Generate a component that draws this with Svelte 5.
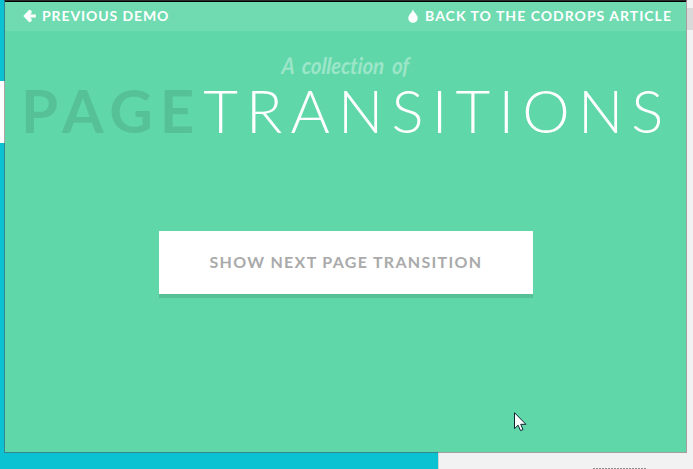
<script>
  const title = { strong: 'PAGE', light: 'TRANSITIONS' };
</script>

<div class="desktop">
  <div class="blue"></div>
  <div class="white-strip"></div>
  <div class="thumb"></div>
  <div class="dots"></div>

  <main class="window">
    <nav>
      <a class="prev" href="#prev">
        <svg width="13" height="14" viewBox="0 0 13 14"><path d="M.3 7 6.2.8 8.6 1.8V4L7.2 5.5H12.8V8.6H7.2L8.6 10.1V12.3L6.2 13.3Z" fill="#fff" /></svg>
        <span>PREVIOUS DEMO</span>
      </a>
      <a class="back" href="#article">
        <svg width="10" height="14" viewBox="0 0 10 14"><path d="M5 0.3C5.5 3.2 9.7 5.8 9.7 9.2A4.7 4.5 0 0 1 .3 9.2C.3 5.8 4.5 3.2 5 .3Z" fill="#fff" /></svg>
        <span>BACK TO THE CODROPS ARTICLE</span>
      </a>
    </nav>
    <header>
      <div class="script"><span>A collection of</span></div>
      <h1><strong>{title.strong}</strong><span>{title.light}</span></h1>
    </header>
    <button>SHOW NEXT PAGE TRANSITION</button>
  </main>

  <svg class="cursor" width="13" height="20" viewBox="0 0 13 20"><path d="M.5.7V16.6L4.1 13.2 6.5 18.6 9 17.5 6.7 12.3H11.9Z" fill="#fff" stroke="#123" stroke-width="1" /></svg>
</div>

<style>
  .desktop {
    position: relative;
    width: 693px;
    height: 469px;
    overflow: hidden;
    background: #f2f2f2;
    font-family: Lato, sans-serif;
  }
  .blue { position: absolute; left: 0; top: 0; width: 438px; height: 469px; background: #0ac2d2; border-right: 1px solid #d4d4d4; }
  .white-strip { position: absolute; left: 0; top: 81px; width: 5px; height: 62px; background: #fff; }
  .thumb { position: absolute; left: 687px; top: 8px; width: 6px; height: 22px; background: #d9d9d9; }
  .dots { position: absolute; left: 593px; top: 468px; width: 53px; height: 1px; background: repeating-linear-gradient(90deg, #8c8c8c 0 2px, #f2f2f2 2px 3px); }
  .window {
    position: absolute;
    left: 4px;
    top: 0;
    width: 683px;
    height: 453px;
    box-sizing: border-box;
    display: flex;
    flex-direction: column;
    align-items: center;
    border: 1px solid rgba(95, 75, 80, 0.5);
    border-top: 1px solid #2b2b2b;
    background: #60d7a9;
    background-clip: padding-box;
  }
  nav {
    align-self: stretch;
    height: 30px;
    border-top: 1px solid #000;
    box-sizing: border-box;
    padding: 0 14px 2px 18px;
    display: flex;
    justify-content: space-between;
    align-items: center;
    background: rgba(255, 255, 255, 0.1);
  }
  a {
    display: flex;
    align-items: center;
    color: #fff;
    text-decoration: none;
    font-size: 14px;
    line-height: 27px;
    font-weight: 700;
    letter-spacing: 0.9px;
    white-space: nowrap;
  }
  .prev { gap: 6px; }
  .back { gap: 7px; letter-spacing: 1.02px; }
  header { width: 100%; display: flex; flex-direction: column; align-items: center; }
  .script { height: 24px; margin-top: 22px; line-height: 24px; font-size: 23px; font-style: italic; font-weight: 700; color: rgba(255, 255, 255, 0.4); white-space: nowrap; font-variant-ligatures: none; }
  .script span { display: inline-block; word-spacing: 4px; transform: scaleX(0.88) skewX(-4deg); }
  h1 {
    margin: 3px 0 0;
    align-self: flex-start;
    padding-left: 16px;
    display: flex;
    gap: 2px;
    font-size: 60px;
    line-height: 60px;
    color: #fff;
    font-weight: 300;
    letter-spacing: 8.15px;
    white-space: nowrap;
  }
  h1 strong { font-weight: 700; letter-spacing: 6.9px; color: rgba(0, 0, 0, 0.1); }
  button {
    width: 374px;
    height: 63px;
    margin: 91px 0 0 1px;
    border: 0;
    padding: 0 0 2px;
    background: #fff;
    box-shadow: 0 4px rgba(0, 0, 0, 0.1);
    font: 700 16px Lato, sans-serif;
    letter-spacing: 1.31px;
    color: #aaa;
  }
  .cursor { position: absolute; left: 514px; top: 412px; }
</style>
